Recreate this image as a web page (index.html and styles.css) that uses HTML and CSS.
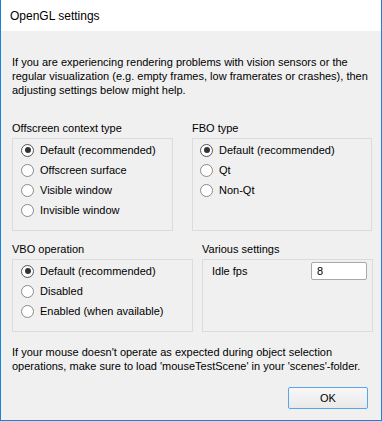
FILE: index.html
```html
<!DOCTYPE html>
<html lang="en">
<head>
  <meta charset="UTF-8">
  <title>OpenGL settings</title>
  <link rel="stylesheet" href="styles.css">
</head>
<body>
  <div class="window">
    <div class="titlebar">OpenGL settings</div>

    <div class="content">
      <p class="intro">If you are experiencing rendering problems with vision sensors or the regular visualization (e.g. empty frames, low framerates or crashes), then adjusting settings below might help.</p>

      <div class="row row-top">
        <div class="group group-offscreen">
          <div class="group-title">Offscreen context type</div>
          <div class="group-box">
            <div class="option"><span class="radio checked"></span>Default (recommended)</div>
            <div class="option"><span class="radio"></span>Offscreen surface</div>
            <div class="option"><span class="radio"></span>Visible window</div>
            <div class="option"><span class="radio"></span>Invisible window</div>
          </div>
        </div>
        <div class="group group-fbo">
          <div class="group-title">FBO type</div>
          <div class="group-box">
            <div class="option"><span class="radio checked"></span>Default (recommended)</div>
            <div class="option"><span class="radio"></span>Qt</div>
            <div class="option"><span class="radio"></span>Non-Qt</div>
          </div>
        </div>
      </div>

      <div class="row row-bottom">
        <div class="group group-vbo">
          <div class="group-title">VBO operation</div>
          <div class="group-box">
            <div class="option"><span class="radio checked"></span>Default (recommended)</div>
            <div class="option"><span class="radio"></span>Disabled</div>
            <div class="option"><span class="radio"></span>Enabled (when available)</div>
          </div>
        </div>
        <div class="group group-various">
          <div class="group-title">Various settings</div>
          <div class="group-box">
            <div class="field">
              <span class="field-label">Idle fps</span>
              <input class="field-input" value="8">
            </div>
          </div>
        </div>
      </div>

      <p class="note">If your mouse doesn't operate as expected during object selection operations, make sure to load 'mouseTestScene' in your 'scenes'-folder.</p>

      <div class="actions">
        <button class="ok">OK</button>
      </div>
    </div>
  </div>
</body>
</html>
```

FILE: styles.css
```css
* {
  margin: 0; padding: 0; box-sizing: border-box;
}
body {
  background: #f0f0f0;
  font-family: 'Liberation Sans', Arial, sans-serif;
  font-size: 11px;
  color: #000;
}
.window {
  width: 382px;
  height: 421px;
  background: #f0f0f0;
  border: 1px solid #1883d7;
  border-top: none;
}
.titlebar {
  height: 31px;
  background: #fff;
  padding-left: 9px;
  padding-top: 1px;
  line-height: 30px;
  font-size: 12px;
}
.content {
  padding: 24px 0 0 11px;
}
.intro, .note {
  line-height: 14px;
}
.intro {
  width: 362px;
}
.row {
  display: flex;
}
.row-top {
  margin-top: 24px;
  gap: 19px;
}
.row-bottom {
  margin-top: 11px;
  gap: 9px;
}
.group {
  display: flex;
  flex-direction: column;
}
.group-title {
  line-height: 14px;
  margin-bottom: 3px;
}
.group-box {
  flex-grow: 1;
  border: 1px solid #dcdcdc;
  padding: 1px 0 10px 8px;
}
.group-offscreen { width: 161px; }
.group-fbo { width: 180px; }
.group-vbo { width: 181px; }
.group-various { width: 171px; }
.group-fbo .group-box { padding-left: 7px; }
.option {
  display: flex;
  align-items: center;
  height: 20px;
}
.radio {
  width: 13px;
  height: 13px;
  border: 1px solid #8a8a8a;
  border-radius: 50%;
  background: #fff;
  margin-right: 6px;
  display: flex;
  align-items: center;
  justify-content: center;
}
.radio.checked {
  border-color: #555;
}
.radio.checked::after {
  content: "";
  width: 6px;
  height: 6px;
  border-radius: 50%;
  background: #333;
}
.field {
  display: flex;
  align-items: center;
  justify-content: space-between;
  height: 20px;
  padding-right: 5px;
}
.field-label {
  padding-left: 1px;
}
.field-input {
  width: 56px;
  height: 18px;
  border: 1px solid #a8a8a8;
  border-radius: 2px;
  background: #fff;
  font-family: inherit;
  font-size: 11px;
  padding-left: 5px;
}
.note {
  margin-top: 13px;
  width: 360px;
}
.actions {
  display: flex;
  justify-content: flex-end;
  padding-right: 13px;
  margin-top: 14px;
}
.ok {
  width: 80px;
  height: 22px;
  border: 1px solid #5aa5e8;
  border-radius: 2px;
  background: linear-gradient(#f8f8f8, #e9e9e9);
  font-family: inherit;
  font-size: 11px;
  color: #000;
}
```
